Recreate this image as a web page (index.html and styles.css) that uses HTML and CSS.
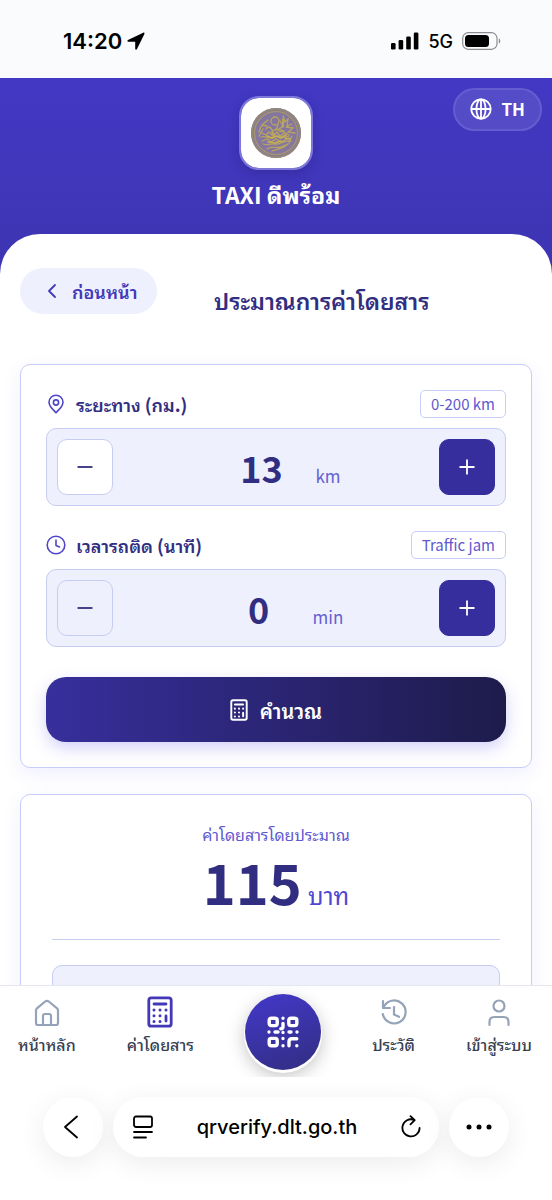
FILE: index.html
```html
<!DOCTYPE html>
<html lang="th">
<head>
<meta charset="utf-8">
<meta name="viewport" content="width=device-width, initial-scale=1">
<title>TAXI ดีพร้อม</title>
<link rel="stylesheet" href="styles.css">
</head>
<body>
<svg class="sprite" aria-hidden="true">
  <symbol id="calculator" viewBox="0 0 26 32">
    <rect x="1.800" y="1.800" width="22.400" height="28.400" rx="2.500" fill="none" stroke="currentColor" stroke-width="2.800"/>
    <path d="M7 8h12M19 20v5" fill="none" stroke="currentColor" stroke-width="2.800" stroke-linecap="round"/>
    <path d="M7 14h.01M13 14h.01M19 14h.01M7 19.700h.01M13 19.700h.01M7 25.400h.01M13 25.400h.01" fill="none" stroke="currentColor" stroke-width="3" stroke-linecap="round"/>
  </symbol>
</svg>
<div class="app">
  <div class="status">
    <div class="status-time">14:20
      <svg width="18" height="18" viewBox="0 0 18 18"><path d="M16.200.700 1 8c-1 .500-.800 1.700.300 1.700h6.900v7c0 1.100 1.300 1.300 1.800.300L17.400 2C17.700 1 17.200.300 16.200.700z"/></svg>
    </div>
    <div class="status-icons">
      <svg width="28" height="18" viewBox="0 0 28 18"><rect x="0" y="11" width="4.600" height="6.500" rx="1.300"/><rect x="7.600" y="8" width="4.600" height="9.500" rx="1.300"/><rect x="15.200" y="4.500" width="4.600" height="13" rx="1.300"/><rect x="22.800" y="0.500" width="4.600" height="17" rx="1.300"/></svg>
      <span>5G</span>
      <svg width="40" height="20" viewBox="0 0 40 20"><rect x=".7" y="1.700" width="34.300" height="16.600" rx="5.500" fill="none" stroke="#8b8d90" stroke-width="1.200"/><rect x="3" y="4" width="24" height="12" rx="3.500"/><path d="M36.800 7.500c2 .6 2 4.400 0 5z" fill="#8b8d90"/></svg>
    </div>
  </div>

  <main class="screen">
    <header class="hero">
      <div class="brand">
        <div class="logo">
          <svg width="52" height="52" viewBox="0 0 52 52" fill="none" stroke-linecap="round">
            <circle cx="26" cy="26" r="25" fill="#8376a0"/>
            <circle cx="26" cy="26" r="24" stroke="#938779" stroke-width="2"/>
            <circle cx="26" cy="26" r="21.500" stroke="#a3946f" stroke-width="1.500" stroke-dasharray="2 1"/>
            <g stroke="#b9a45e" stroke-width="1.300">
              <circle cx="25" cy="14" r="4"/>
              <path d="M9 25c1-6 5-9 9-12M12 18l5 1M33 9l2 6 3-3-1 7 5-2M30 14l3 5-4 3 5 2M36 20l7 1-5 4 7 1M16 22c2-3 5-2 6 1s4-3 6 0 5 0 7 3"/>
              <path d="M12 26l4 2 3-3 4 4 4-4 3 4 5-3 4 2M11 30c5-2 9 3 14 0s7 2 14-1M12 34l5-2 4 3 5-3 5 3 8-4M13 37c6 2 8-1 12 0s9-4 16-3M17 42c7-5 11 2 18-4M22 44c6-3 10-1 16-7M13 22l-4 7M42 29l-3 7M28 18l-2 5"/>
            </g>
            <path d="M17 29l5 2 4-2 5 2 5-3M18 35l7 1 6-2M22 25l2 3M33 12v8M35 31l5 1" stroke="#c4ae55" stroke-width="1.600"/>
          </svg>
        </div>
        <div class="brand-name">TAXI ดีพร้อม</div>
      </div>
      <button class="lang" type="button">
        <svg width="22" height="22" viewBox="0 0 22 22" fill="none" stroke="currentColor" stroke-width="1.800"><circle cx="11" cy="11" r="9.700"/><ellipse cx="11" cy="11" rx="4.600" ry="9.700"/><path d="M1.300 11h19.400M11 1.300v19.400"/></svg>
        TH
      </button>
    </header>

    <section class="sheet">
      <div class="heading">
        <button class="back" type="button">
          <svg width="20" height="20" viewBox="0 0 20 20" fill="none" stroke="currentColor" stroke-width="1.800" stroke-linecap="round" stroke-linejoin="round"><path d="M13 4 7 10l6 6"/></svg>
          ก่อนหน้า
        </button>
        <h1>ประมาณการค่าโดยสาร</h1>
      </div>

      <form class="card">
        <div class="field">
          <div class="field-head">
            <label for="distance">
              <svg width="20" height="20" viewBox="0 0 20 20" fill="none" stroke="currentColor" stroke-width="1.600" stroke-linejoin="round"><path d="M10 18.700C7.500 16 3 12.500 3 8.200a7 7 0 0 1 14 0c0 4.300-4.500 7.800-7 10.500z"/><circle cx="10" cy="8.500" r="2.600"/></svg>
              ระยะทาง (กม.)
            </label>
            <span class="tag">0-200 km</span>
          </div>
          <div class="stepper">
            <button class="step" type="button" aria-label="ลดระยะทาง"><svg width="24" height="24" viewBox="0 0 24 24"><path d="M4.500 12h15"/></svg></button>
            <div class="amount"><input id="distance" type="text" inputmode="numeric" value="13"><span>km</span></div>
            <button class="step step-add" type="button" aria-label="เพิ่มระยะทาง"><svg width="24" height="24" viewBox="0 0 24 24"><path d="M4.500 12h15M12 4.500v15"/></svg></button>
          </div>
        </div>
        <div class="field">
          <div class="field-head">
            <label for="jam">
              <svg width="20" height="20" viewBox="0 0 20 20" fill="none" stroke="currentColor" stroke-width="1.600" stroke-linecap="round" stroke-linejoin="round"><circle cx="10" cy="10" r="8.800"/><path d="M10 5v5.500l3.500 1.500"/></svg>
              เวลารถติด (นาที)
            </label>
            <span class="tag">Traffic jam</span>
          </div>
          <div class="stepper">
            <button class="step step-off" type="button" aria-label="ลดเวลา"><svg width="24" height="24" viewBox="0 0 24 24"><path d="M4.500 12h15"/></svg></button>
            <div class="amount"><input id="jam" type="text" inputmode="numeric" value="0"><span>min</span></div>
            <button class="step step-add" type="button" aria-label="เพิ่มเวลา"><svg width="24" height="24" viewBox="0 0 24 24"><path d="M4.500 12h15M12 4.500v15"/></svg></button>
          </div>
        </div>
        <button class="submit" type="button">
          <svg width="18" height="22"><use href="#calculator"/></svg>
          คำนวณ
        </button>
      </form>

      <section class="card result">
        <p class="result-label">ค่าโดยสารโดยประมาณ</p>
        <p class="fare"><strong>115</strong><span>บาท</span></p>
        <hr>
        <div class="detail"></div>
      </section>
    </section>
  </main>

  <nav class="tabs">
    <a href="#home" class="tab">
      <svg width="28" height="32" viewBox="0 0 28 32" fill="none" stroke="#94a3b8" stroke-width="2.200" stroke-linecap="round" stroke-linejoin="round"><path d="M3 14.500c0-1 .5-1.700 1.200-2.300l8-6.700c1.100-.9 2.500-.9 3.600 0l8 6.700c.7.600 1.200 1.300 1.200 2.300V27c0 1.300-.8 2-2 2H5c-1.200 0-2-.7-2-2z"/><path d="M10 29v-9c0-1.300.7-2 2-2h4c1.300 0 2 .7 2 2v9"/></svg>
      หน้าหลัก
    </a>
    <a href="#fare" class="tab tab-current"><svg width="26" height="32"><use href="#calculator"/></svg>ค่าโดยสาร</a>
    <a href="#scan" class="scan" aria-label="สแกน QR">
      <svg width="34" height="34" viewBox="0 0 34 34" fill="none" stroke="#fff" stroke-width="3.400" stroke-linecap="round" stroke-linejoin="round">
        <rect x="3.200" y="3.200" width="8" height="7.400" rx="2"/><rect x="22.800" y="3.200" width="8" height="7.400" rx="2"/><rect x="3.200" y="23.400" width="8" height="7.400" rx="2"/>
        <path d="M17 3.200h.01M17 8.500v3c0 1.500-.7 2.200-2.200 2.200M3 17h.01M9 17h3M17 17.500h.01M23 17h2M31 17h.01M17 23.500h.01M17 30.800h.01M23 30.800v-4c0-2 1-3 3-3h4.800M30.800 30.800h.01"/>
      </svg>
    </a>
    <a href="#history" class="tab">
      <svg width="28" height="32" viewBox="0 0 28 32" fill="none" stroke="#94a3b8" stroke-width="2.200" stroke-linecap="round" stroke-linejoin="round"><path d="M3 5v7h7M3.500 11.500A11.500 11.500 0 1 1 2.800 18M14 11v7.500l5 2.300"/></svg>
      ประวัติ
    </a>
    <a href="#login" class="tab">
      <svg width="28" height="32" viewBox="0 0 28 32" fill="none" stroke="#94a3b8" stroke-width="2.200" stroke-linecap="round"><circle cx="14" cy="10" r="5.500"/><path d="M4.500 29v-3c0-3 2-5 5-5h9c3 0 5 2 5 5v3"/></svg>
      เข้าสู่ระบบ
    </a>
  </nav>

  <div class="browser">
    <button class="round" type="button" aria-label="Back"><svg width="24" height="24" viewBox="0 0 24 24" fill="none" stroke="#000" stroke-width="1.800" stroke-linecap="round" stroke-linejoin="round"><path d="M16 1.500 4 12l12 10.500"/></svg></button>
    <div class="address">
      <svg width="22" height="24" viewBox="0 0 22 24" fill="none" stroke="#000" stroke-width="1.800" stroke-linecap="round"><rect x="2" y="1.500" width="18" height="10.500" rx="2"/><path d="M2 17h18M2 22.500h12"/></svg>
      <span>qrverify.dlt.go.th</span>
      <svg width="22" height="24" viewBox="0 0 22 24" fill="none" stroke="#000" stroke-width="1.800" stroke-linecap="round" stroke-linejoin="round"><path d="M14 4.800A8.600 8.600 0 1 0 19.600 13M10.500 1.200l4.200 4-4.200 4.200"/></svg>
    </div>
    <button class="round" type="button" aria-label="More"><svg width="26" height="6" viewBox="0 0 26 6"><circle cx="3" cy="3" r="2.500"/><circle cx="13" cy="3" r="2.500"/><circle cx="23" cy="3" r="2.500"/></svg></button>
  </div>
</div>
</body>
</html>
```
FILE: styles.css
```css
* { box-sizing: border-box; }

body {
  margin: 0;
  background: #fff;
  color: #312e81;
  font-family: "Noto Sans CJK JP", "Noto Sans Thai Looped", "Sarabun", "Noto Sans Thai", sans-serif;
}

button, input { font: inherit; color: inherit; }
button { padding: 0; border: 0; cursor: pointer; }
h1, p { margin: 0; }
svg { flex: none; display: block; }
.sprite { display: none; }

.app { display: flex; flex-direction: column; height: 100vh; }

.status {
  flex: none;
  display: flex;
  justify-content: space-between;
  align-items: center;
  height: 78px;
  padding: 4px 50px 0 63px;
  background: #f9fbfd;
  color: #000;
  font-family: Inter, sans-serif;
}
.status-time, .status-icons { display: flex; align-items: center; }
.status-time { gap: 5px; font-size: 22px; font-weight: 600; }
.status-icons { gap: 9px; font-size: 18px; font-weight: 500; }

.screen {
  flex: 1;
  min-height: 0;
  overflow: hidden;
  background: linear-gradient(#4238c4, #3e35b3 180px);
}

.hero {
  display: grid;
  grid-template-columns: 1fr auto 1fr;
  align-items: start;
  padding: 10px;
  height: 156px;
}
.brand {
  grid-column: 2;
  display: flex;
  flex-direction: column;
  align-items: center;
  padding-top: 8px;
  gap: 10px;
}
.logo {
  display: grid;
  place-items: center;
  width: 74px;
  height: 74px;
  border: 2px solid #7f78d8;
  border-radius: 20px;
  background: #fff;
  background-clip: padding-box;
  box-shadow: 0 4px 12px rgba(20, 16, 80, .2);
}
.brand-name { font-size: 23px; line-height: 28px; font-weight: 700; color: #fff; }
.lang {
  grid-column: 3;
  justify-self: end;
  display: flex;
  align-items: center;
  gap: 10px;
  height: 43px;
  padding: 0 15px 2px;
  border: 2px solid #655dcf;
  border-radius: 22px;
  background: rgba(255, 255, 255, .1);
  color: #fff;
  font-size: 17px;
  font-weight: 600;
}

.sheet {
  padding: 34px 20px 0;
  border-radius: 40px 40px 0 0;
  background: #fff;
}
.heading { display: flex; align-items: flex-start; margin-bottom: 28px; }
.back {
  display: flex;
  align-items: center;
  gap: 10px;
  height: 46px;
  padding: 0 20px 0 22px;
  border-radius: 23px;
  background: #eef0fe;
  color: #4338b8;
  font-size: 18px;
  font-weight: 600;
}
h1 {
  flex: 1;
  margin: 18px 0 22px;
  padding-right: 46px;
  font-size: 23px;
  line-height: 28px;
  font-weight: 600;
  text-align: center;
}

.card {
  margin-bottom: 26px;
  padding: 25px;
  border: 1px solid #c7cdf8;
  border-radius: 10px;
  background: #fff;
  box-shadow: 0 6px 18px rgba(99, 102, 241, .1);
}
.field { margin-bottom: 25px; }
.field-head {
  display: flex;
  justify-content: space-between;
  align-items: center;
  margin-bottom: 10px;
}
.field-head label {
  display: flex;
  align-items: center;
  gap: 10px;
  font-size: 18px;
  line-height: 26px;
  font-weight: 600;
}
.field-head svg { color: #4f46c8; }
.tag {
  padding: 0 10px;
  border: 1px solid #c7cdf8;
  border-radius: 5px;
  color: #5f58d0;
  font-size: 15px;
  line-height: 26px;
}
.stepper {
  display: flex;
  justify-content: space-between;
  align-items: center;
  padding: 10px;
  border: 1px solid #c7cdf0;
  border-radius: 10px;
  background: #eef0fe;
}
.step {
  display: grid;
  place-items: center;
  width: 56px;
  height: 56px;
  border: 1px solid #c7cdf0;
  border-radius: 10px;
  background: #fff;
}
.step svg { fill: none; stroke: currentColor; stroke-width: 1.8; }
.step-off { background: transparent; }
.step-add { border-color: #362e9c; background: #362e9c; color: #fff; }
.amount { display: flex; align-items: baseline; gap: 4px; }
.amount input {
  width: 100px;
  height: 48px;
  padding: 0;
  border: 0;
  background: transparent;
  font-size: 36px;
  font-weight: 700;
  text-align: center;
}
.amount span { color: #6560d0; font-size: 17px; line-height: 24px; }

.submit {
  display: flex;
  justify-content: center;
  align-items: center;
  gap: 12px;
  width: 100%;
  height: 65px;
  margin-top: 30px;
  border-radius: 20px;
  background: linear-gradient(90deg, #372f9c, #1e1b4b);
  color: #fff;
  font-size: 20px;
  font-weight: 600;
  box-shadow: 0 6px 16px rgba(79, 70, 229, .25);
}

.result { padding: 26px 31px; }
.result-label { color: #5f58d0; font-size: 16px; line-height: 26px; text-align: center; }
.fare {
  display: flex;
  justify-content: center;
  align-items: baseline;
  gap: 6px;
  height: 70px;
}
.fare strong { font-size: 56px; line-height: 68px; }
.fare span { color: #4f46d0; font-size: 24px; line-height: 32px; }
hr { margin: 22px 0 25px; border: 0; border-top: 1px solid #c7cdf0; }
.detail { height: 120px; border: 1px solid #c7cdf0; border-radius: 10px; background: #eef0fe; }

.tabs {
  flex: none;
  position: relative;
  overflow: hidden;
  display: flex;
  justify-content: space-between;
  align-items: flex-start;
  height: 92px;
  padding: 8px 20px 0 18px;
  border-top: 1px solid #e5e7ef;
  background: #fff;
}
.tab {
  display: flex;
  flex-direction: column;
  align-items: center;
  gap: 4px;
  padding-top: 2px;
  color: #374151;
  font-size: 16px;
  line-height: 24px;
  font-weight: 500;
  text-decoration: none;
}
.tab-current svg { color: #4338b8; }
.scan {
  display: grid;
  place-items: center;
  width: 76px;
  height: 76px;
  border-radius: 50%;
  background: linear-gradient(160deg, #4338ca, #312e81);
  box-shadow: 0 2px 0 1px #fff, 0 6px 18px rgba(0, 0, 0, .25);
}

.browser {
  flex: none;
  display: flex;
  justify-content: center;
  gap: 10px;
  height: 123px;
  padding: 20px 43px 0;
  background: #fff;
}
.round, .address {
  height: 60px;
  border-radius: 30px;
  background: #fff;
  box-shadow: 0 6px 28px rgba(0, 0, 0, .08);
}
.round { flex: none; display: grid; place-items: center; width: 60px; }
.address {
  flex: 1;
  display: flex;
  justify-content: space-between;
  align-items: center;
  padding: 0 17px 0 19px;
  color: #000;
  font-family: Inter, sans-serif;
  font-size: 20px;
  font-weight: 500;
}
```
